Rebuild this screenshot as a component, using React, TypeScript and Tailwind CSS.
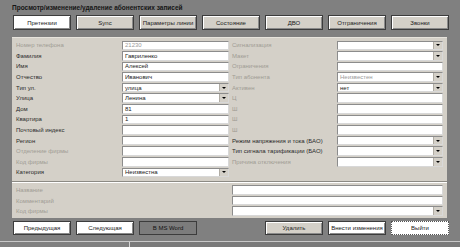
import React from 'react';

type Field = {
  label: string;
  value?: string;
  kind?: 'text' | 'select';
  off?: boolean; // disabled label (grey)
  muted?: boolean; // grey value text
};

const leftFields: Field[] = [
  { label: 'Номер телефона', value: '21230', off: true, muted: true },
  { label: 'Фамилия', value: 'Гавриленко' },
  { label: 'Имя', value: 'Алексей' },
  { label: 'Отчество', value: 'Иванович' },
  { label: 'Тип ул.', value: 'улица', kind: 'select' },
  { label: 'Улица', value: 'Ленина', kind: 'select' },
  { label: 'Дом', value: '81' },
  { label: 'Квартира', value: '1' },
  { label: 'Почтовый индекс' },
  { label: 'Регион' },
  { label: 'Отделение фирмы', off: true },
  { label: 'Код фирмы', off: true },
  { label: 'Категория', value: 'Неизвестна', kind: 'select' },
];

const rightFields: Field[] = [
  { label: 'Сигнализация', kind: 'select', off: true },
  { label: 'Макет', kind: 'select', off: true },
  { label: 'Ограничения', off: true },
  { label: 'Тип абонента', value: 'Неизвестен', kind: 'select', off: true, muted: true },
  { label: 'Активен', value: 'нет', kind: 'select', off: true },
  { label: 'Ц', off: true },
  { label: 'Ш', off: true },
  { label: 'Ш', off: true },
  { label: 'Ш', off: true },
  { label: 'Режим напряжения и тока (БАО)', kind: 'select' },
  { label: 'Тип сигнала тарификации (БАО)', kind: 'select' },
  { label: 'Причина отключения', kind: 'select', off: true },
];

const extraFields: Field[] = [
  { label: 'Название', off: true },
  { label: 'Комментарий', off: true },
  { label: 'Код фирмы', kind: 'select', off: true },
];

const tabs = ['Претензии', 'Sync', 'Параметры линии', 'Состояние', 'ДВО', 'Отграничения', 'Звонки'];

const Box = ({ f }: { f: Field }) => (
  <div className="relative h-[9.6px] w-full bg-white border border-[#8c8c8c] border-b-[#d8d8d8] border-r-[#d8d8d8] flex items-center">
    <span className={`pl-[2px] text-[6px] leading-none ${f.muted ? 'text-[#9a9a9a]' : 'text-[#222]'}`}>
      {f.value}
    </span>
    {f.kind === 'select' && (
      <span className="absolute right-0 top-0 h-full w-[9px] bg-[#d4d0c8] border-l border-[#b0aca4] flex items-center justify-center">
        <span className="w-0 h-0 border-l-[2px] border-r-[2px] border-t-[2px] border-l-transparent border-r-transparent border-t-black" />
      </span>
    )}
  </div>
);

const Row = ({ f, labelW, inputW }: { f: Field; labelW: string; inputW: string }) => (
  <div className="flex items-center h-[10.6px]">
    <div className={`${labelW} shrink-0 text-[6px] leading-none whitespace-nowrap ${f.off ? 'text-[#a09c94]' : 'text-[#2a2a2a]'}`}>
      {f.label}
    </div>
    <div className={inputW}>
      <Box f={f} />
    </div>
  </div>
);

const btn =
  'h-full flex items-center justify-center text-[6px] leading-none text-[#202020] border border-[#3c3c3c] shadow-[inset_1px_1px_0_#ffffff,inset_-1px_-1px_0_#8a8a8a]';

export default function App() {
  return (
    <div className="w-[460px] h-[247px] bg-[#808080] overflow-hidden flex flex-col font-['Liberation_Sans',Arial,sans-serif]">
      <div className="h-[15px] pl-[12px] pt-[4px] text-[6.5px] leading-[8px] font-bold text-[#151515]">
        Просмотр/изменение/удаление абонентских записей
      </div>

      <div className="ml-[13px] w-[436px] h-[15px] grid grid-cols-7 gap-[5px]">
        {tabs.map((t, i) => (
          <div key={t} className={`${btn} ${i === 0 ? 'bg-white' : 'bg-[#d4d0c8]'}`}>
            {t}
          </div>
        ))}
      </div>

      <div className="mt-[7px] ml-[12px] w-[435px] h-[181px] bg-[#d4d0c8] border-t border-[#e6e3dc] px-[4px] pt-[2px]">
        <div className="flex gap-[3px]">
          <div className="flex flex-col">
            {leftFields.map((f, i) => (
              <Row key={i} f={f} labelW="w-[106px]" inputW="w-[107px]" />
            ))}
          </div>
          <div className="flex flex-col">
            {rightFields.map((f, i) => (
              <Row key={i} f={f} labelW="w-[105px]" inputW="w-[106px]" />
            ))}
          </div>
        </div>
        <div className="-mx-[4px] mt-[3px] h-[2px] border-t border-[#8c8a84] border-b border-b-white" />
        <div className="mt-[2px] flex flex-col">
          {extraFields.map((f, i) => (
            <Row key={i} f={f} labelW="w-[216px]" inputW="w-[211px]" />
          ))}
        </div>
      </div>

      <div className="mt-[3px] ml-[13px] w-[436px] h-[14px] grid grid-cols-7 gap-[5px]">
        <div className={`${btn} bg-white`}>Предыдущая</div>
        <div className={`${btn} bg-white`}>Следующая</div>
        <div className="h-full flex items-center justify-center text-[6px] leading-none text-[#111] bg-[#7c7c7c] border border-[#3c3c3c]">
          В MS Word
        </div>
        <div />
        <div className={`${btn} bg-[#d4d0c8]`}>Удалить</div>
        <div className={`${btn} bg-white`}>Внести изменения</div>
        <div className="h-full flex items-center justify-center text-[6px] leading-none text-[#202020] bg-white border border-dotted border-[#555]">
          Выйти
        </div>
      </div>

      <div className="mt-[6px] flex h-[6px] border-t border-[#c8c8c8]">
        <div className="w-[130px] h-full border-r border-[#d8d8d8]" />
        <div className="flex-1 h-full bg-[#7a7a7a]" />
      </div>
    </div>
  );
}
